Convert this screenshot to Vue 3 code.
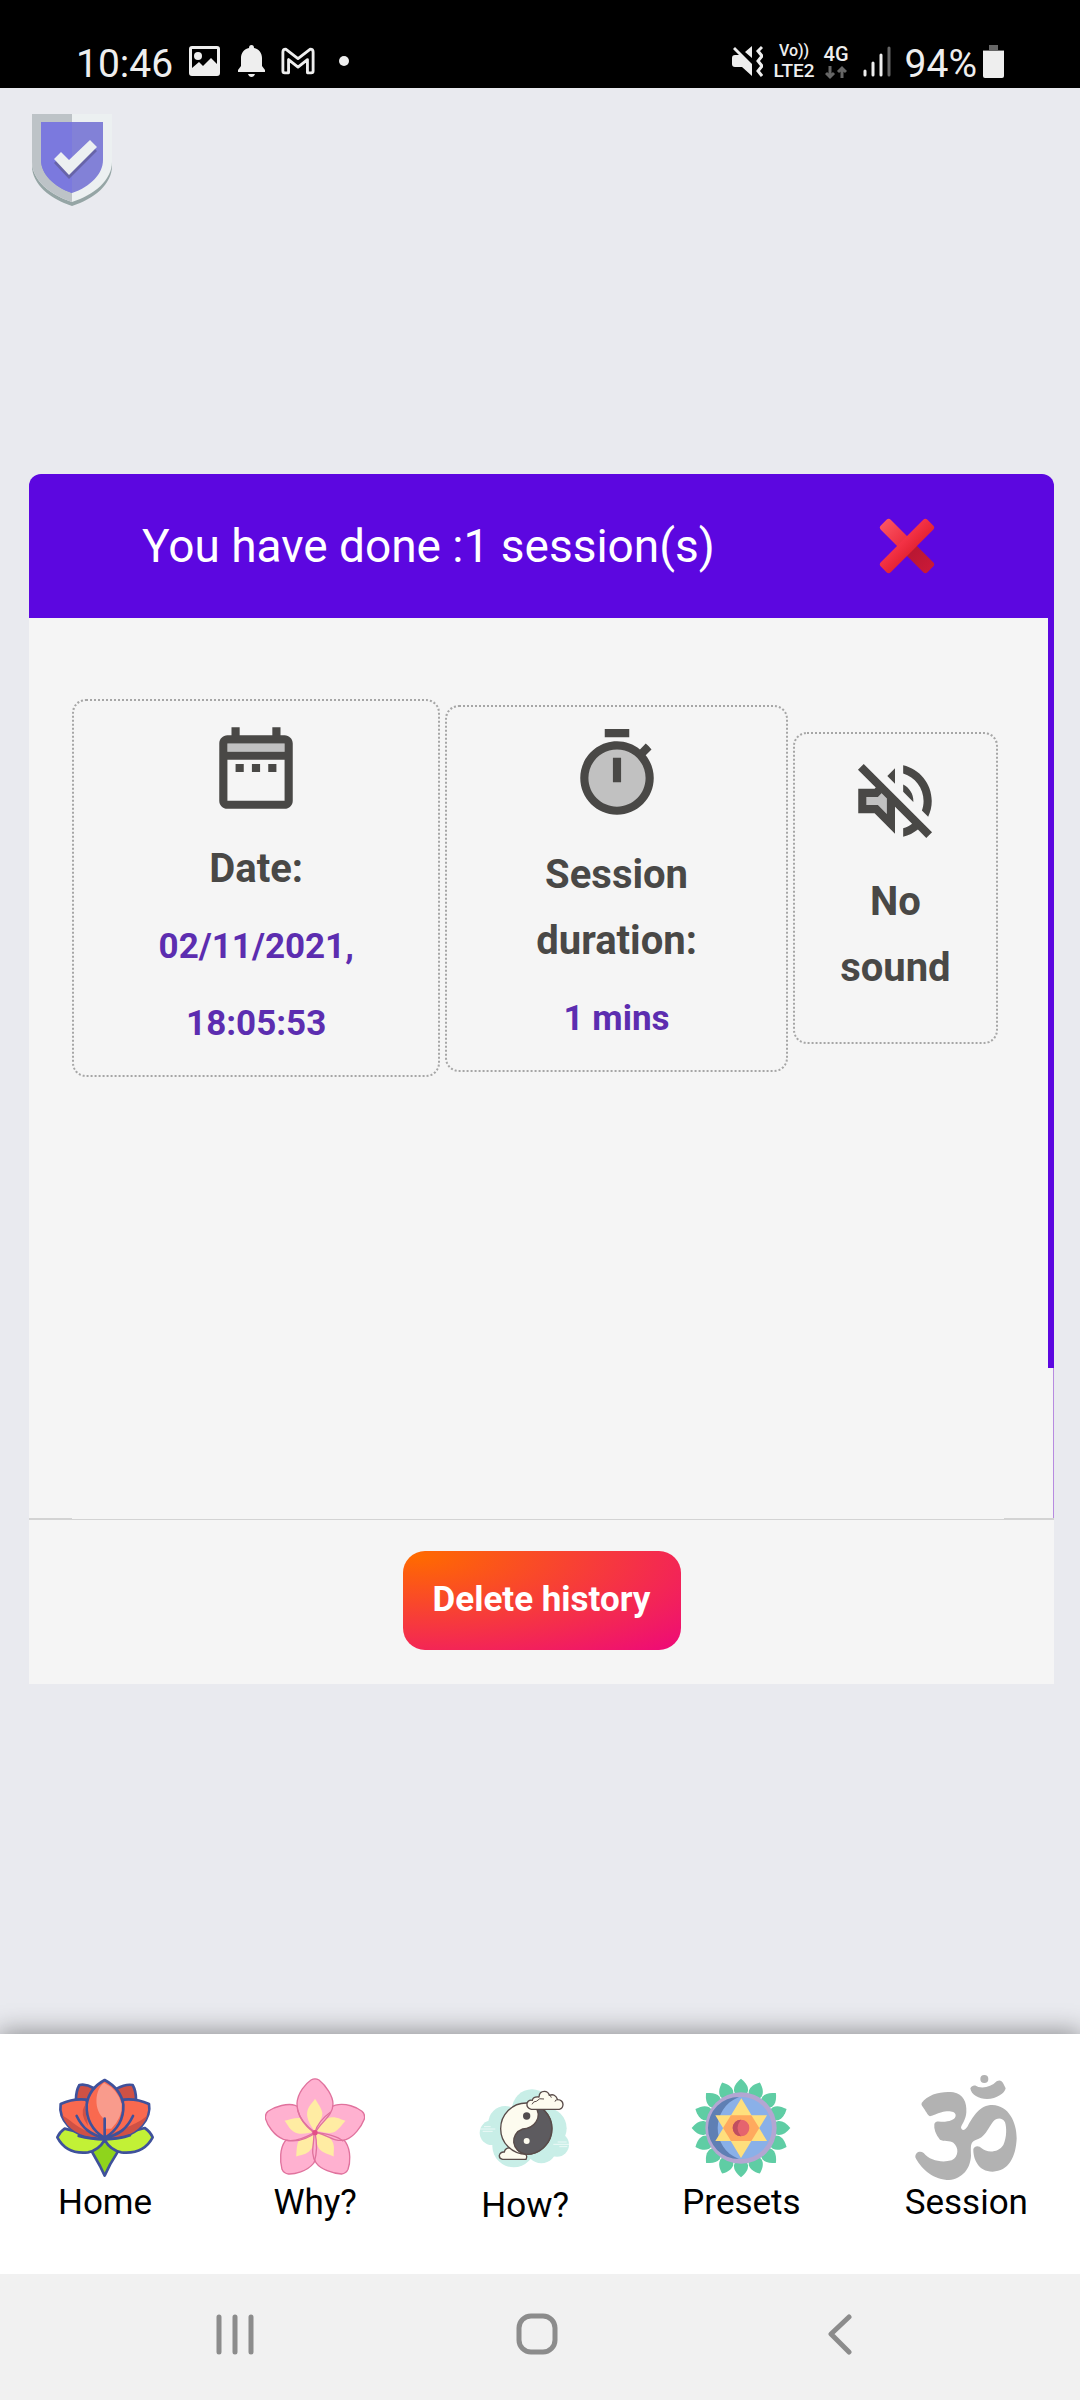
<script setup>
const cards = [
  { id: 'date', icon: 'calendar', title: 'Date:', value: '02/11/2021, 18:05:53' },
  { id: 'duration', icon: 'timer', title: 'Session duration:', value: '1 mins' },
  { id: 'sound', icon: 'muted', title: 'No sound', value: '' },
]
const petals = [216, 144, 288, 72, 0]
const leaves = Array.from({ length: 16 }, (_, i) => i * 22.5)
</script>

<template>
  <div class="page">
    <header class="status">
      <div class="status-group">
        <span class="clock">10:46</span>
        <svg class="photo" width="31" height="30" viewBox="0 0 31 30" aria-hidden="true">
          <path fill="#eee" fill-rule="evenodd" d="M3 0H28Q31 0 31 3V27Q31 30 28 30H3Q0 30 0 27V3Q0 0 3 0ZM3 3V22L10 16L14 20L22 12L28 18V3Z" />
          <circle cx="9" cy="10" r="4" fill="#eee" />
        </svg>
        <svg class="bell" width="27" height="32" viewBox="0 0 27 32" aria-hidden="true">
          <path fill="#eee" d="M13.500 0Q16 0 16 3C21 4 24 8 24 13V21L27 25V27H0V25L3 21V13C3 8 6 4 11 3Q11 0 13.500 0ZM10 29H17Q16 32 13.500 32T10 29Z" />
        </svg>
        <svg class="mail" width="34" height="28" viewBox="0 0 36 29" aria-hidden="true">
          <path fill="none" stroke="#eee" stroke-width="3" stroke-linejoin="round" d="M2 5Q2 2 5 2L18 12L31 2Q34 2 34 5V25Q34 27 32 27H28V13L18 21L8 13V27H4Q2 27 2 25Z" />
        </svg>
        <svg width="10" height="10" viewBox="0 0 10 10" aria-hidden="true"><circle cx="5" cy="5" r="5" fill="#eee" /></svg>
      </div>
      <div class="status-group right">
        <svg width="31" height="33" viewBox="0 0 31 33" aria-hidden="true">
          <path fill="#eee" d="M3 2L20 19V31L10 22H3Q0 22 0 19V13Q0 10 3 10H7L1 4ZM20 1V13L13 7Z" />
          <path fill="none" stroke="#eee" stroke-width="3" d="M30 2L26 6L30 11L26 16L30 21L26 26L30 31" />
        </svg>
        <span class="volte"><span class="voice">Vo))</span><span>LTE2</span></span>
        <span class="network">
          <span>4G</span>
          <svg width="22" height="15" viewBox="0 0 22 15" fill="none" stroke="#666" stroke-width="3" aria-hidden="true">
            <path d="M5 1V12M1 8L5 12L9 8M17 13V3M13 7L17 3L21 7" />
          </svg>
        </span>
        <svg class="signal" width="28" height="31" viewBox="0 0 28 31" stroke-width="3" stroke-linecap="round" aria-hidden="true">
          <path stroke="#eee" d="M2 25V29M10 17V29M18 9V29" /><path stroke="#666" d="M26 2V29" />
        </svg>
        <span class="battery-text">94%</span>
        <svg class="battery" width="21" height="33" viewBox="0 0 21 33" aria-hidden="true">
          <path fill="#666" d="M6 0H15V5H21V7H0V5H6Z" /><path fill="#eee" d="M0 6H21V31Q21 33 19 33H2Q0 33 0 31Z" />
        </svg>
      </div>
    </header>

    <main class="main">
      <svg class="shield" width="80" height="92" viewBox="0 0 80 92" role="img" aria-label="Protected">
        <path fill="#95a5a5" d="M0 5H80V52C80 70 62 85 40 92C18 85 0 70 0 52Z" />
        <path fill="#ecf0f1" d="M0 0H80V48C80 66 62 81 40 88C18 81 0 66 0 48Z" />
        <path fill="#bdc3c7" d="M0 0H40V88C18 81 0 66 0 48Z" />
        <path fill="#8281d7" d="M9 8H71V46C71 60 58 73 40 79C22 73 9 60 9 46Z" />
        <path fill="#7b79de" d="M9 8H40V79C22 73 9 60 9 46Z" />
        <path fill="#6764a8" d="M22 49L29 42L37 50L58 30L65 37L37 65Z" />
        <path fill="#ecf0f1" d="M22 45L29 38L37 46L58 26L65 33L37 61Z" />
      </svg>

      <section class="panel">
        <header class="panel-head">
          <h1>You have done :1 session(s)</h1>
          <button class="close" type="button" aria-label="Close">
            <svg width="56" height="56" viewBox="0 0 56 56" aria-hidden="true">
              <defs>
                <linearGradient id="cross-a" x1="0" y1="0" x2="1" y2="0"><stop stop-color="#fc5360" /><stop offset=".5" stop-color="#e9283a" /><stop offset=".62" stop-color="#b91733" /><stop offset="1" stop-color="#ca1937" /></linearGradient>
                <linearGradient id="cross-b" x1="0" y1="0" x2="0" y2="1"><stop stop-color="#f43346" /><stop offset="1" stop-color="#e52434" /></linearGradient>
              </defs>
              <rect x="-5" y="21" width="66" height="14" rx="3" fill="url(#cross-a)" transform="rotate(45 28 28)" />
              <rect x="-5" y="21" width="66" height="14" rx="3" fill="url(#cross-b)" transform="rotate(-45 28 28)" />
            </svg>
          </button>
        </header>

        <div class="panel-body">
          <div class="cards">
            <article v-for="card in cards" :key="card.id" class="card" :class="card.id">
              <svg width="98" height="98" viewBox="0 0 24 24" fill="#494846" aria-hidden="true">
                <template v-if="card.icon === 'calendar'">
                  <path fill="#c1c1c1" d="M5 8h14V6H5v2z" />
                  <path d="M7 11h2v2H7v-2zm14-5v14c0 1.100-.9 2-2 2H5c-1.110 0-2-.9-2-2l.01-14c0-1.100.88-2 1.990-2h1V2h2v2h8V2h2v2h1c1.100 0 2 .9 2 2zM5 8h14V6H5v2zm14 12V10H5v10h14zm-4-7h2v-2h-2v2zm-4 0h2v-2h-2v2z" />
                </template>
                <template v-else-if="card.icon === 'timer'">
                  <circle cx="12" cy="13" r="7.500" fill="#c1c1c1" />
                  <path d="M9 1h6v2H9zM11 8h2v6h-2zM19.030 7.390l1.420-1.420c-.43-.51-.9-.99-1.410-1.410l-1.420 1.420C16.070 4.740 14.120 4 12 4c-4.970 0-9 4.030-9 9s4.020 9 9 9 9-4.030 9-9c0-2.120-.74-4.070-1.970-5.610zM12 20c-3.870 0-7-3.130-7-7s3.130-7 7-7 7 3.130 7 7-3.130 7-7 7z" />
                </template>
                <template v-else>
                  <path fill="#c1c1c1" d="M7.830 11H5v2h2.830L10 15.170v-3.760l-1.290-1.290z" />
                  <path d="M4.340 2.930L2.930 4.340 7.290 8.700 7 9H3v6h4l5 5v-6.590l4.180 4.180c-.65.49-1.380.88-2.180 1.110v2.060c1.340-.3 2.570-.92 3.610-1.750l2.050 2.050 1.410-1.410L4.340 2.930zM10 15.170L7.830 13H5v-2h2.830l.88-.88L10 11.410v3.760zM19 12c0 .82-.15 1.610-.41 2.340l1.530 1.530c.56-1.170.88-2.480.88-3.870 0-4.280-2.990-7.860-7-8.770v2.060c2.890.86 5 3.540 5 6.710zm-7-8l-1.880 1.880L12 7.760zm4.500 8c0-1.770-1.020-3.290-2.500-4.030v1.790l2.480 2.480c.01-.08.02-.16.02-.24z" />
                </template>
              </svg>
              <h2>{{ card.title }}</h2>
              <p>{{ card.value }}</p>
            </article>
          </div>
          <div class="track"><div class="thumb"></div></div>
        </div>

        <div class="divider"></div>
        <footer class="panel-foot">
          <button class="delete" type="button">Delete history</button>
        </footer>
      </section>
    </main>

    <nav class="tabs">
      <a href="#home">
        <svg viewBox="101 176 300 300" stroke="#3f519b" stroke-width="8" stroke-linejoin="round" stroke-linecap="round" aria-hidden="true">
          <path fill="#8fd41c" d="M210 394L236 440L250 469L266 436L290 396L250 362Z" />
          <path fill="#c2f136" d="M130 328Q115 338 108 354C128 392 163 403 200 399Q232 393 250 362Q268 393 300 399C340 403 374 392 394 354Q386 336 370 326L250 358Z" />
          <path fill="#cf5145" d="M164 240Q164 215 174 197Q195 193 216 206L240 300H170ZM344 240Q344 215 334 197Q313 193 286 208L262 300H340Z" />
          <path fill="#f9694f" d="M194 241Q155 237 118 254C112 290 140 358 250 359C362 358 390 290 383 254Q345 237 307 241L251 350Z" />
          <path fill="#cf5145" stroke="none" d="M122 288C160 310 180 340 250 352C190 360 140 338 122 288ZM379 288C348 315 320 320 251 354C312 360 360 338 379 288ZM190 258Q174 285 200 320Z" />
          <path fill="#f9694f" d="M250 356C214 334 194 300 196 255Q203 208 250 182Q298 208 306 256C308 300 286 334 250 356Z" />
          <path fill="#f99b8c" stroke="none" d="M248 190C220 210 215 275 251 300V328H270Q304 294 301 254Q290 210 248 190Z" />
          <path fill="none" d="M250 360V298M250 356C205 346 183 325 166 290M250 356C297 346 318 325 335 290M250 360Q208 360 172 350M250 360Q295 359 326 348" />
        </svg>
        <span>Home</span>
      </a>
      <a href="#why">
        <svg viewBox="725 174 300 300" aria-hidden="true">
          <g v-for="angle in petals" :key="angle" :transform="`rotate(${angle} 875 332)`">
            <path fill="#ffb1d0" stroke="#e0729d" stroke-width="4" d="M875 340C840 315 821 285 821 250C823 218 848 190 863 180Q875 173 887 180C908 197 929 228 929 252C929 290 890 306 875 340Z" />
            <path fill="#ffeca3" d="M875 335C857 310 847 290 853 270C858 254 868 248 875 236C882 248 896 266 897 280C897 300 880 316 875 335Z" />
          </g>
          <path fill="none" stroke="#e0729d" stroke-width="4" d="M875 337C850 320 830 300 823 270M875 337C850 350 820 366 790 361M875 337C882 370 880 402 873 426M875 337C910 342 940 346 960 364M875 337C882 310 900 292 922 276" />
          <circle cx="875" cy="338" r="8" fill="#e34f87" />
        </svg>
        <span>Why?</span>
      </a>
      <a class="how" href="#how">
        <svg viewBox="97 178 300 300" aria-hidden="true">
          <g fill="#c8eee7">
            <circle cx="268" cy="272" r="60" /><circle cx="188" cy="313" r="51" /><circle cx="148" cy="342" r="37" /><circle cx="213" cy="382" r="64" /><circle cx="310" cy="329" r="62" /><circle cx="343" cy="378" r="36" /><circle cx="296" cy="388" r="46" />
          </g>
          <path stroke="#fff" stroke-width="2" d="M112 331H158M124 324H144M120 338H150M332 377H380M345 370H372M350 384H374" />
          <g stroke="#594b49" stroke-width="4" stroke-linejoin="round">
            <path fill="#fdfbef" d="M180 422Q169 420 170 410Q173 399 185 400Q188 386 204 388Q218 380 228 394Q242 394 245 405Q256 410 250 422Z" />
            <circle cx="251" cy="330" r="77" fill="#fdfbef" />
            <path fill="#5d5b5f" d="M275 257A77 77 0 0 1 251 407C205 400 200 345 240 331C270 330 305 300 275 257Z" />
            <path fill="#fdfbef" d="M266 272Q251 268 253 254Q257 242 269 245Q271 233 289 235Q290 218 305 218Q317 218 320 230Q337 223 345 243Q360 244 361 257Q361 270 350 272Z" />
            <path fill="none" stroke-width="3" d="M268 257Q272 247 281 248Q290 236 304 241M320 230Q326 233 326 237M345 243Q337 243 337 249" />
          </g>
          <circle cx="252" cy="292" r="11" fill="#514b4d" /><circle cx="252" cy="367" r="9" fill="#fdfbef" />
        </svg>
        <span>How?</span>
      </a>
      <a href="#presets">
        <svg viewBox="751 175 300 300" aria-hidden="true">
          <path v-for="angle in leaves" :key="angle" fill="#5fcda4" :transform="`rotate(${angle} 901 325)`" d="M901 177C916 189 923 200 922 213L915 235H887L880 213C879 200 886 189 901 177Z" />
          <circle cx="901" cy="325" r="107" fill="#b3a6d2" />
          <circle cx="901" cy="325" r="93" fill="#8ab0e8" />
          <path fill="#5f7fb4" d="M895 232A93 93 0 0 0 895 418C810 385 810 265 895 232Z" />
          <path fill="#ffdf7d" d="M902 236L979 364H824ZM901 415L824 287H979Z" />
          <path fill="#ffa95e" d="M871 287H932L956 325L932 364H871L847 325Z" />
          <circle cx="901" cy="325" r="25" fill="#e5646e" />
          <path fill="#c04f60" d="M901 300A25 25 0 0 0 901 350Q880 325 901 300Z" />
        </svg>
        <span>Presets</span>
      </a>
      <a href="#session">
        <svg class="om" viewBox="233 177 300 300" fill="#b2b2b2" aria-hidden="true">
          <path d="M250 252C270 225 310 216 345 220C375 226 386 250 384 280C383 300 372 314 368 325C370 337 380 335 388 322C405 290 425 258 462 258C512 260 535 310 535 358C533 415 510 457 463 458C420 458 404 420 405 390C408 380 422 378 430 388C445 402 480 402 495 378C506 355 505 325 500 310C492 295 475 296 464 308C448 330 440 355 412 363C394 370 398 385 398 410C396 455 365 483 325 483C280 480 245 445 231 415C230 400 245 394 256 402C275 425 310 432 340 424C362 412 362 385 345 371C335 363 315 368 305 362C292 346 286 330 288 315C292 303 305 309 320 308C340 306 352 300 352 288C350 275 325 275 310 280C295 284 285 290 275 292C268 290 262 275 252 262Q248 257 250 252Z" />
          <path d="M396 208C402 196 412 198 420 204C440 208 460 202 475 187C483 182 490 184 494 192L502 208C500 222 475 240 446 240C422 240 398 228 396 208Z" />
          <circle cx="438" cy="180" r="12" />
        </svg>
        <span>Session</span>
      </a>
    </nav>

    <footer class="system">
      <button type="button" aria-label="Recent apps">
        <svg width="42" height="42" viewBox="0 0 42 42" aria-hidden="true"><path d="M5 4V39M21 4V39M37 4V39" /></svg>
      </button>
      <button type="button" aria-label="Home">
        <svg width="42" height="42" viewBox="0 0 42 42" aria-hidden="true"><rect x="3" y="3" width="36" height="36" rx="12" /></svg>
      </button>
      <button type="button" aria-label="Back">
        <svg width="42" height="42" viewBox="0 0 42 42" aria-hidden="true"><path d="M31 4L13 21L31 39" /></svg>
      </button>
    </footer>
  </div>
</template>

<style>
body {
  background: #e9eaef;
}
</style>

<style scoped>
.page {
  display: flex;
  flex-direction: column;
  min-height: 100vh;
  font-family: Roboto, "Liberation Sans", sans-serif;
  background: #e9eaef;
}
svg {
  display: block;
  flex: none;
}
button {
  padding: 0;
  border: 0;
  background: none;
  font-family: inherit;
}

.status {
  display: flex;
  justify-content: space-between;
  align-items: flex-end;
  padding: 0 76px 4px;
  height: 88px;
  box-sizing: border-box;
  background: #000;
  color: #eee;
}
.status-group {
  display: flex;
  align-items: center;
  height: 46px;
}
.clock,
.battery-text {
  padding-top: 6px;
  font-size: 39px;
  line-height: 46px;
}
.photo { margin-left: 16px; }
.bell { margin-left: 18px; }
.mail { margin: 0 24px 0 16px; }
.volte,
.network {
  display: flex;
  flex-direction: column;
  align-items: center;
  font-weight: 500;
}
.volte {
  margin: 0 9px 0 11px;
  font-size: 19px;
  line-height: 21px;
}
.volte .voice { font-size: 16px; line-height: 19px; }
.network {
  gap: 2px;
  padding-top: 2px;
  margin-right: 14px;
  font-size: 20px;
  line-height: 18px;
}
.signal { margin-right: 14px; }
.battery { margin-left: 6px; }

.main {
  flex: 1;
  padding: 26px 26px 26px 29px;
}
.shield { margin-left: 3px; }
.panel { margin-top: 268px; }
.panel-head {
  display: flex;
  align-items: center;
  justify-content: space-between;
  min-height: 144px;
  padding: 0 119px 0 113px;
  border-radius: 12px 12px 0 0;
  background: #5c07e0;
}
h1 {
  margin: 0;
  color: #fff;
  font-size: 46px;
  font-weight: 400;
  line-height: 56px;
}
.panel-body {
  display: flex;
  min-height: 900px;
  background: #f5f5f5;
}
.cards {
  display: grid;
  grid-template-columns: 368fr 342fr 205fr;
  flex: 1;
  align-items: center;
  align-self: flex-start;
  gap: 5px;
  padding: 81px 50px 40px 43px;
}
.card {
  display: flex;
  flex-direction: column;
  align-items: center;
  padding: 18px 40px 13px;
  border: 2px dotted #a6a6a6;
  border-radius: 14px;
  text-align: center;
}
.sound { padding-bottom: 35px; }
.card h2 {
  margin: 19px 0 6px;
  color: #494846;
  font-size: 40px;
  font-weight: 700;
  line-height: 66px;
}
.card p {
  margin: 0;
  color: #5c2db0;
  font-size: 35px;
  font-weight: 700;
  line-height: 77px;
}
.track {
  width: 6px;
  box-sizing: border-box;
  border-right: 1px solid #b78be0;
}
.thumb {
  width: 6px;
  height: 750px;
  background: #5c07e0;
}
.divider {
  height: 2px;
  background: linear-gradient(to right, #d3d3d3 43px, transparent 43px, transparent calc(100% - 50px), #d3d3d3 calc(100% - 50px)) 0 0 / 100% 1px no-repeat, linear-gradient(#f5f5f5 1px, #d3d3d3 1px);
}
.panel-foot {
  display: flex;
  justify-content: center;
  padding: 31px 0 34px;
  background: #f5f5f5;
}
.delete {
  height: 99px;
  padding: 0 30px 2px;
  border-radius: 22px;
  background: radial-gradient(ellipse at 5% 5%, #ff6a00, #ee0979);
  color: #fff;
  font-size: 35px;
  font-weight: 700;
}

.tabs {
  display: flex;
  justify-content: space-around;
  min-height: 240px;
  padding: 44px 0 0;
  box-sizing: border-box;
  background: #fff;
  box-shadow: 0 0 24px 2px rgba(0, 0, 0, .4);
}
.tabs a {
  display: flex;
  flex-direction: column;
  align-items: center;
  gap: 4px;
  min-width: 106px;
  color: #000;
  font-size: 35px;
  line-height: 42px;
  text-decoration: none;
}
.tabs .how { gap: 7px; }
.tabs svg {
  width: 100px;
  height: 100px;
}
.om { overflow: visible; }

.system {
  display: flex;
  justify-content: center;
  align-items: center;
  gap: 260px;
  height: 126px;
  padding-bottom: 6px;
  padding-right: 6px;
  box-sizing: border-box;
  background: #f1f1f1;
}
.system svg {
  fill: none;
  stroke: #8c8c8c;
  stroke-width: 5px;
  stroke-linecap: round;
  stroke-linejoin: round;
}
</style>
